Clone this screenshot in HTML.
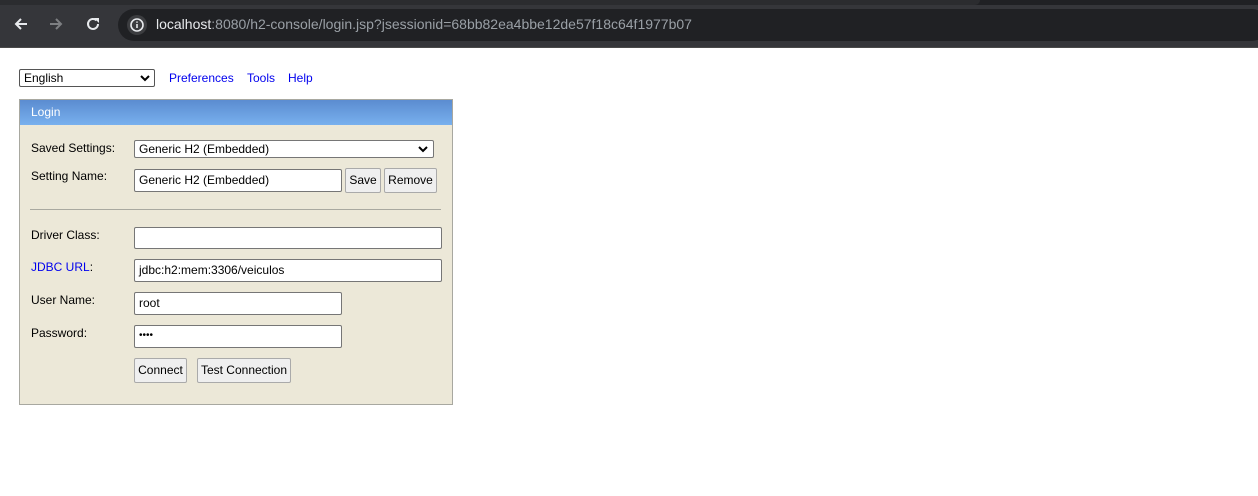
<!DOCTYPE html>
<html><head><style>
*{box-sizing:border-box;margin:0;padding:0}
body{width:1258px;height:496px;background:#fff;font-family:"Liberation Sans",Arial,sans-serif;font-size:12px;position:relative;overflow:hidden}
.a{position:absolute}
.bar{left:0;top:0;width:1258px;height:48px;background:#35363a;border-bottom:1px solid #4a4a4a}
.pill{left:118px;top:9px;width:1150px;height:32px;border-radius:16px;background:#202124}
.url{left:156px;top:16px;font-size:14px;color:#9aa0a6}
.url b{font-weight:normal;color:#e8eaed}
.inp{background:#fff;border:1px solid #767676;border-radius:2px;padding-left:4px;font-size:12px;line-height:20px;color:#000}
.btn{background:#efefef;border:1px solid #aaa;border-radius:2px;text-align:center;font-size:12px;color:#000}
.lbl{font-size:12px;color:#000}
a{color:#00e;text-decoration:none}
</style></head><body>
<div class="a bar"></div>
<div class="a" style="left:0;top:0;width:1258px;height:5px;background:#202124"></div>
<div class="a" style="left:0;top:0;width:980px;height:5px;background:#2b2c2f;border-radius:0 0 6px 0"></div>
<div class="a pill"></div>
<svg class="a" style="left:12px;top:15px" width="18" height="18" viewBox="0 0 18 18"><path d="M15 9H4M9 4L4 9l5 5" stroke="#e8eaed" stroke-width="2" fill="none"/></svg>
<svg class="a" style="left:47px;top:15px" width="18" height="18" viewBox="0 0 18 18"><path d="M3 9h11M9 4l5 5-5 5" stroke="#7d7f82" stroke-width="2" fill="none"/></svg>
<svg class="a" style="left:84px;top:15px" width="18" height="18" viewBox="0 0 18 18"><path d="M14 9a5 5 0 1 1-1.5-3.6" stroke="#e8eaed" stroke-width="2" fill="none"/><path d="M10 3h5v5z" fill="#e8eaed"/></svg>
<div class="a" style="left:127px;top:15px;width:20px;height:20px;border-radius:10px;background:#3c3d40"></div>
<svg class="a" style="left:129px;top:17px" width="16" height="16" viewBox="0 0 16 16"><circle cx="8" cy="8" r="6" stroke="#e8eaed" stroke-width="1.6" fill="none"/><path d="M8 7v4M8 4.5v1.2" stroke="#e8eaed" stroke-width="1.6"/></svg>
<div class="a url"><b>localhost</b>:8080/h2-console/login.jsp?jsessionid=68bb82ea4bbe12de57f18c64f1977b07</div>

<div class="a inp" style="left:19px;top:69px;width:136px;height:18px;line-height:16px;border-color:#555">English</div>
<svg class="a" style="left:140px;top:74px" width="10" height="8"><path d="M1 2l4 4 4-4" stroke="#000" stroke-width="2" fill="none"/></svg>
<div class="a" style="left:169px;top:71px"><a>Preferences</a></div>
<div class="a" style="left:247px;top:71px"><a>Tools</a></div>
<div class="a" style="left:288px;top:71px"><a>Help</a></div>

<div class="a" style="left:19px;top:99px;width:434px;height:306px;background:#ece8d8;border:1px solid #a8a8a0"></div>
<div class="a" style="left:20px;top:100px;width:432px;height:25px;background:linear-gradient(#5b8cd0,#78b0ee);color:#fff;padding:5px 0 0 11px">Login</div>

<div class="a lbl" style="left:31px;top:141px">Saved Settings:</div>
<div class="a inp" style="left:134px;top:140px;width:300px;height:18px;line-height:16px">Generic H2 (Embedded)</div>
<svg class="a" style="left:418px;top:145px" width="10" height="8"><path d="M1 2l4 4 4-4" stroke="#000" stroke-width="2" fill="none"/></svg>
<div class="a lbl" style="left:31px;top:169px">Setting Name:</div>
<div class="a inp" style="left:134px;top:169px;width:208px;height:23px">Generic H2 (Embedded)</div>
<div class="a btn" style="left:345px;top:168px;width:36px;height:25px;line-height:23px">Save</div>
<div class="a btn" style="left:384px;top:168px;width:53px;height:25px;line-height:23px">Remove</div>
<div class="a" style="left:30px;top:209px;width:411px;height:1px;background:#a9a9a0"></div>

<div class="a lbl" style="left:31px;top:228px">Driver Class:</div>
<div class="a inp" style="left:134px;top:227px;width:308px;height:22px"></div>
<div class="a lbl" style="left:31px;top:260px;color:#00e">JDBC URL<span style="color:#000">:</span></div>
<div class="a inp" style="left:134px;top:259px;width:308px;height:23px">jdbc:h2:mem:3306/veiculos</div>
<div class="a lbl" style="left:31px;top:293px">User Name:</div>
<div class="a inp" style="left:134px;top:292px;width:208px;height:23px">root</div>
<div class="a lbl" style="left:31px;top:326px">Password:</div>
<div class="a inp" style="left:134px;top:325px;width:208px;height:23px;font-size:10px">&#8226;&#8226;&#8226;&#8226;</div>
<div class="a btn" style="left:134px;top:358px;width:53px;height:25px;line-height:23px">Connect</div>
<div class="a btn" style="left:197px;top:358px;width:94px;height:25px;line-height:23px">Test Connection</div>
</body></html>
